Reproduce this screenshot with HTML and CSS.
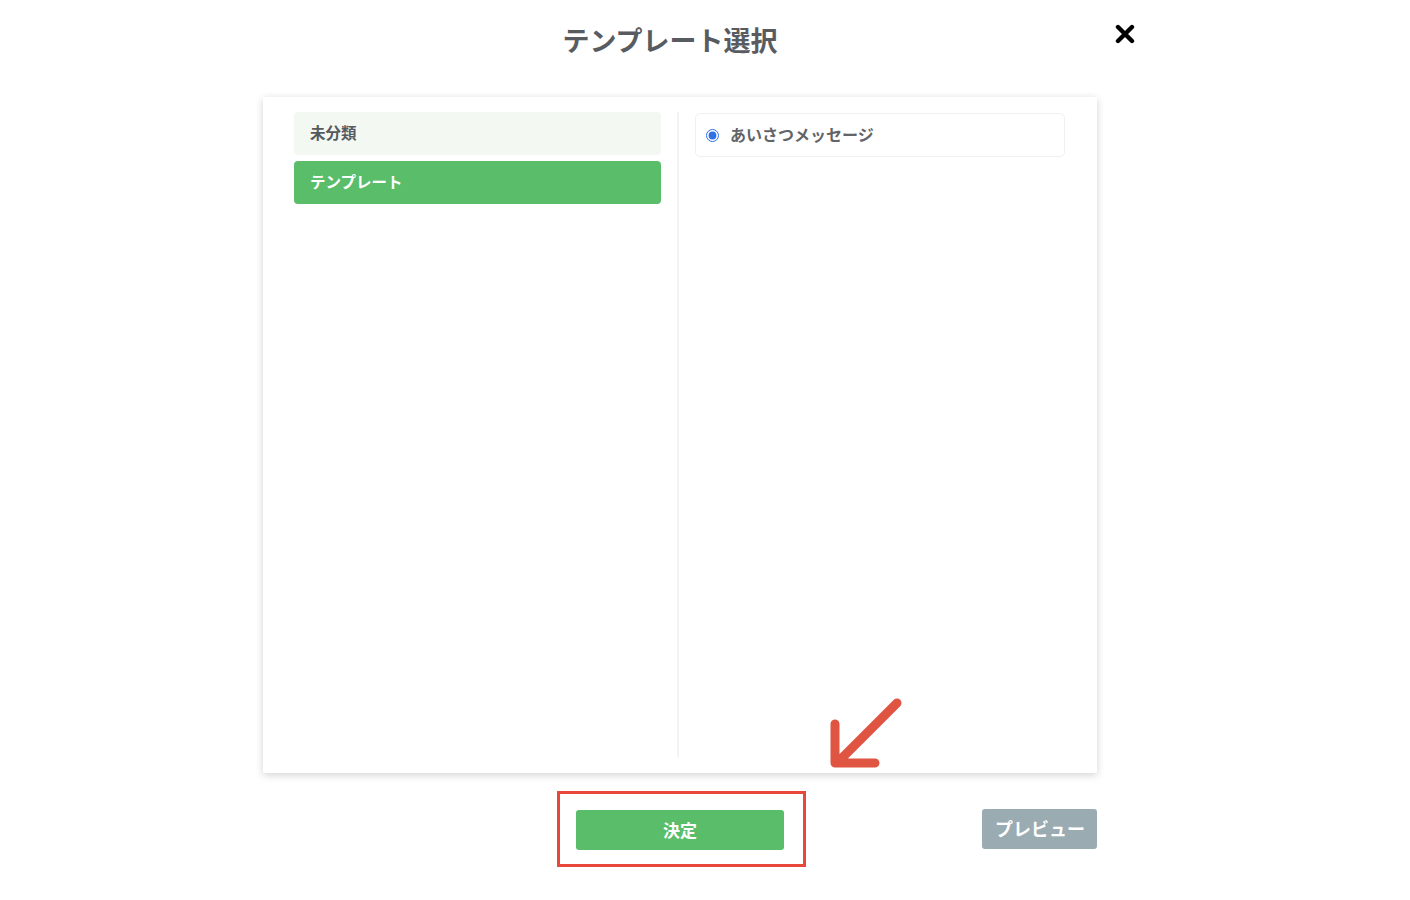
FILE: index.html
```html
<!DOCTYPE html>
<html lang="ja">
<head>
  <meta charset="UTF-8">
  <title>テンプレート選択</title>
  <meta name="viewport" content="width=device-width, initial-scale=1.0">
  <link rel="stylesheet" href="styles.css">
</head>
<body>
  <div class="modal">
    <div class="modal-header">
      <h1 class="modal-title">テンプレート選択</h1>
      <button class="close-btn" aria-label="閉じる">
        <svg width="20" height="20" viewBox="0 0 20 20">
          <path d="M3 3 L17 17 M17 3 L3 17" stroke="#000" stroke-width="4.4" stroke-linecap="round" fill="none"/>
        </svg>
      </button>
    </div>

    <div class="card">
      <ul class="category-list">
        <li class="category">未分類</li>
        <li class="category active">テンプレート</li>
      </ul>
      <div class="template-list">
        <label class="template">
          <input type="radio" name="template" checked>
          <span>あいさつメッセージ</span>
        </label>
      </div>
    </div>

    <!-- annotation arrow -->
    <svg class="hint-arrow" width="90" height="90" viewBox="0 0 90 90">
      <path d="M77 8 L18 67 M15 29 V68 H55" stroke="#e05442" stroke-width="9" stroke-linecap="round" stroke-linejoin="round" fill="none"/>
    </svg>

    <div class="modal-footer">
      <div class="highlight">
        <button class="btn btn-green">決定</button>
      </div>
      <button class="btn btn-gray">プレビュー</button>
    </div>
  </div>
</body>
</html>
```

FILE: styles.css
```css
body { margin: 0; background: #fff; font-family: "Noto Sans CJK JP", "Noto Sans", sans-serif; }

.modal { position: relative; width: 834px; margin-left: 263px; }

.modal-header { position: relative; padding-top: 20px; height: 40px; padding-right: 20px; }
.modal-title { margin: 0; text-align: center; font-size: 27px; line-height: 40px; font-weight: 700; color: #585c61; }
.close-btn { position: absolute; right: -38px; top: 24px; padding: 0; border: 0; background: none; cursor: pointer; line-height: 0; }

.card {
  display: flex;
  margin-top: 37px;
  height: 676px;
  box-sizing: border-box;
  padding: 15px 32px 16px 31px;
  background: #fff;
  box-shadow: 0 2px 8px rgba(0, 0, 0, 0.18);
}

.category-list { list-style: none; margin: 0; padding: 0; width: 367px; flex-shrink: 0; }
.category {
  height: 43px; line-height: 41px; padding-left: 16px; margin-bottom: 6px;
  border-radius: 4px; background: #f4f8f2; color: #555a5e;
  font-size: 15.5px; font-weight: 700;
}
.category.active { background: #5abd6a; color: #fff; }

.template-list { flex: 1; margin-left: 16px; padding-left: 16px; border-left: 2px solid #f3f3f3; }
.template {
  display: flex; align-items: center; height: 44px; margin-top: 1px; padding-left: 10px;
  border: 1px solid #f0f0f0; border-radius: 5px; box-sizing: border-box;
  color: #626568; font-size: 16px; font-weight: 700;
}
.template span { margin-top: -2px; }
.template input { margin: 0 11px 0 0; width: 13px; height: 13px; accent-color: #2f6fe8; }

.hint-arrow { position: absolute; left: 557px; top: 695px; }

.modal-footer { display: flex; align-items: center; margin-top: 18px; padding-left: 294px; }
.highlight { border: 3.5px solid #e8473b; padding: 16px 19px 14px 16px; }
.btn { height: 40px; border: 0; border-radius: 3px; color: #fff; font-family: inherit; font-weight: 700; cursor: pointer; padding-bottom: 3px; }
.btn-green { width: 208px; background: #5abd6a; font-size: 17px; }
.btn-gray { width: 115px; margin-left: auto; padding: 0 0 3px 13px; text-align: left; background: #9aabb2; font-size: 18px; white-space: nowrap; overflow: hidden; }
```
